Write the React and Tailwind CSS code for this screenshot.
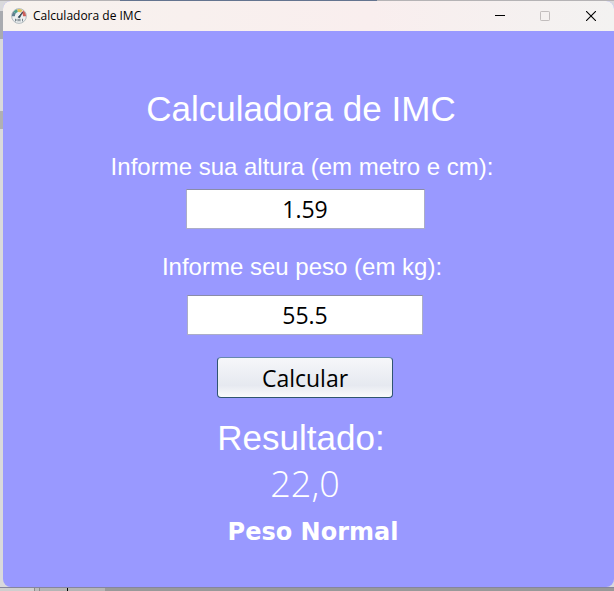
import React, { useState } from "react";

const arial = "font-['Liberation_Sans',Arial,sans-serif]";
const segoe = "font-['Open_Sans','Noto_Sans',sans-serif]";

function GaugeIcon() {
  return (
    <svg viewBox="0 0 16 16" className="size-4 shrink-0" aria-hidden="true">
      <circle cx="8" cy="8" r="7.4" fill="#edf0f1" stroke="#a3adb2" strokeWidth="0.8" />
      <path d="M2.4 8.2A5.6 5.6 0 0 1 3.6 4.6" fill="none" stroke="#5f7f90" strokeWidth="3" />
      <path d="M3.6 4.6A5.6 5.6 0 0 1 6.6 2.6" fill="none" stroke="#4b9c8c" strokeWidth="3" />
      <path d="M6.6 2.6A5.6 5.6 0 0 1 10.8 3.2" fill="none" stroke="#dfc35e" strokeWidth="3" />
      <path d="M11.4 3.6A5.6 5.6 0 0 1 13.6 8.2" fill="none" stroke="#cc5f5a" strokeWidth="3" />
      <path d="M7.2 9.2 11.5 4.2 8.6 9.8Z" fill="#2c4654" stroke="#2c4654" strokeWidth="0.8" />
      <path d="M4.5 10.8v2.6M7 10.8v2.6M9 10.8v2.6M11.5 10.8v2.6M4.5 12H6M7 12h2" stroke="#6d7b83" strokeWidth="0.9" />
    </svg>
  );
}

function TitleBar() {
  return (
    <header className="flex h-[30px] items-center bg-linear-to-r from-[#f7f2ee] via-[#f9eeee] via-60% to-[#f3f2f1] pl-2">
      <GaugeIcon />
      <span className={`${segoe} flex-1 pl-[6px] text-[12px] leading-4 text-black`}>Calculadora de IMC</span>
      <button type="button" aria-label="Minimizar" className="flex h-full w-[45px] items-center justify-center">
        <svg viewBox="0 0 10 10" className="size-[10px]"><path d="M0 4.5h10" stroke="#000" /></svg>
      </button>
      <button type="button" aria-label="Maximizar" disabled className="flex h-full w-[45px] items-center justify-center">
        <svg viewBox="0 0 10 10" className="size-[10px]"><rect x="0.5" y="0.5" width="9" height="9" rx="0.7" fill="none" stroke="#c2bdbd" /></svg>
      </button>
      <button type="button" aria-label="Fechar" className="flex h-full w-[47px] items-center justify-center">
        <svg viewBox="0 0 10 10" className="size-[10px]"><path d="M0 0 10 10M10 0 0 10" stroke="#000" strokeWidth="1.1" /></svg>
      </button>
    </header>
  );
}

const field = `${segoe} h-10 border border-[#abadc8] border-t-[#8a8ca8] bg-white text-center text-[23px] leading-8 text-black outline-none`;

export default function App() {
  const [altura, setAltura] = useState("1.59");
  const [peso, setPeso] = useState("55.5");
  const [imc, setImc] = useState("22,0");
  const [faixa, setFaixa] = useState("Peso Normal");

  function calcular(e) {
    e.preventDefault();
    const v = Number(peso) / Number(altura) ** 2;
    if (!Number.isFinite(v)) return;
    setImc(v.toFixed(1).replace(".", ","));
    setFaixa(v < 18.5 ? "Abaixo do Peso" : v < 25 ? "Peso Normal" : v < 30 ? "Sobrepeso" : "Obesidade");
  }

  return (
    <div className="flex min-h-screen flex-col bg-[#d9d9dc]">
      <div className="flex h-px">
        <div className="w-[120px] bg-[#b5b3b5]" />
        <div className="w-[257px] bg-[#64748f]" />
        <div className="flex-1 bg-[#b5b3b5]" />
      </div>
      <div className="flex flex-1">
        <div className="flex w-[3px] flex-col">
          <div className="h-[10px]" />
          <div className="h-7 bg-[#a9abb0]" />
          <div className="h-[72px]" />
          <div className="h-[18px] bg-[#b0b0b2]" />
        </div>
        <main className="flex flex-1 flex-col overflow-hidden rounded-lg bg-[#9999ff]">
          <TitleBar />
          <form onSubmit={calcular} className="flex flex-1 flex-col items-center pt-[58px] pr-[7px] text-white">
            <h1 className={`${arial} pr-2 text-[35px] leading-10`}>Calculadora de IMC</h1>
            <label htmlFor="altura" className={`${arial} mt-6 pr-[6px] text-[24px] leading-7`}>
              Informe sua altura (em metro e cm):
            </label>
            <input id="altura" value={altura} onChange={(e) => setAltura(e.target.value)} className={`${field} mt-2 w-[239px]`} />
            <label htmlFor="peso" className={`${arial} mt-6 pr-[6px] text-[24px] leading-7`}>
              Informe seu peso (em kg):
            </label>
            <input id="peso" value={peso} onChange={(e) => setPeso(e.target.value)} className={`${field} mt-[14px] w-[236px]`} />
            <button
              type="submit"
              className={`${segoe} mt-[22px] h-[41px] w-44 rounded border border-[#2f5570] border-t-[#6688ad] bg-linear-to-b from-[#f6f7fa] via-[#e6e9f0] via-70% to-[#fafbfc] text-[23px] leading-8 text-black`}
            >
              Calcular
            </button>
            <h2 className={`${arial} mt-5 pr-2 text-[35px] leading-10`}>Resultado:</h2>
            <output htmlFor="altura peso" className={`${segoe} mt-[2px] text-[36px] leading-[48px] font-light`}>{imc}</output>
            <p className="mt-2 pl-4 font-['Arial_Black','DejaVu_Sans',sans-serif] text-[24px] leading-8 font-black">{faixa}</p>
          </form>
        </main>
      </div>
      <div className="flex h-1 border-t border-[#85859c]">
        <div className="w-[35px] border-r border-[#8b8b8b] bg-[#cfcfcf]" />
        <div className="w-[5px] border-r border-[#8b8b8b] bg-[#bdbdbd]" />
        <div className="w-[27px] bg-[#b5b5b5]" />
        <div className="w-px bg-black" />
        <div className="w-[37px] bg-[#b5b5b5]" />
        <div className="flex-1 bg-[#999999]" />
      </div>
    </div>
  );
}
